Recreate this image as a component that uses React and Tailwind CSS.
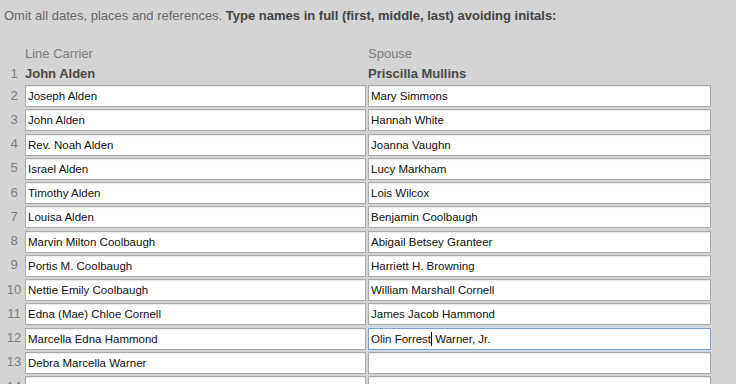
const rows = [
  ["Joseph Alden", "Mary Simmons"],
  ["John Alden", "Hannah White"],
  ["Rev. Noah Alden", "Joanna Vaughn"],
  ["Israel Alden", "Lucy Markham"],
  ["Timothy Alden", "Lois Wilcox"],
  ["Louisa Alden", "Benjamin Coolbaugh"],
  ["Marvin Milton Coolbaugh", "Abigail Betsey Granteer"],
  ["Portis M. Coolbaugh", "Harriett H. Browning"],
  ["Nettie Emily Coolbaugh", "William Marshall Cornell"],
  ["Edna (Mae) Chloe Cornell", "James Jacob Hammond"],
  ["Marcella Edna Hammond", null],
  ["Debra Marcella Warner", ""],
  ["", ""],
];

const inputClass =
  "h-[22px] w-full border border-[#a9a9a9] bg-white px-[2px] text-[11.5px] text-[#111] outline-none shadow-[inset_0_1px_1px_rgba(0,0,0,0.08)]";

function NameInput({ value }) {
  return <input readOnly defaultValue={value} className={inputClass} />;
}

function FocusedInput() {
  return (
    <div className="flex h-[22px] w-full items-center border border-[#7c9fd4] bg-white px-[2px] text-[11.5px] text-[#111] shadow-[0_0_0_1px_#cddcf0]">
      <span className="whitespace-pre">Olin Forrest</span>
      <span className="inline-block h-[14px] w-[1px] bg-black" />
      <span className="whitespace-pre"> Warner, Jr.</span>
    </div>
  );
}

export default function App() {
  return (
    <div className="h-screen overflow-hidden bg-[#d4d4d4] pl-[4px] font-['Liberation_Sans',Arial,sans-serif]">
      <p className="pt-[8px] text-[13px] leading-[16px] text-[#666]">
        Omit all dates, places and references.{" "}
        <span className="font-bold text-[#444]">
          Type names in full (first, middle, last) avoiding initals:
        </span>
      </p>

      <div className="mt-[16px] grid grid-cols-[19px_341px_343px] gap-x-[2px] text-[13px] leading-[16px]">
        <div className="h-[20px]" />
        <div className="h-[20px] pt-[6px] text-[#7d7d7d]">Line Carrier</div>
        <div className="h-[20px] pt-[6px] text-[#7d7d7d]">Spouse</div>

        <div className="h-[24px] pl-[1px] pt-[6px] text-center text-[#7d7d7d]">1</div>
        <div className="h-[24px] pt-[6px] font-bold text-[#4a4a4a]">John Alden</div>
        <div className="h-[24px] pt-[6px] font-bold text-[#4a4a4a]">Priscilla Mullins</div>

        {rows.map(([carrier, spouse], i) => (
          <div key={i} className="contents">
            <div className="flex h-[24.25px] items-center justify-center pb-[1px] pl-[1px] text-[#7d7d7d]">
              {i + 2}
            </div>
            <div className="h-[24.25px] pt-[1px]">
              <NameInput value={carrier} />
            </div>
            <div className="h-[24.25px] pt-[1px]">
              {spouse === null ? <FocusedInput /> : <NameInput value={spouse} />}
            </div>
          </div>
        ))}
      </div>
    </div>
  );
}
